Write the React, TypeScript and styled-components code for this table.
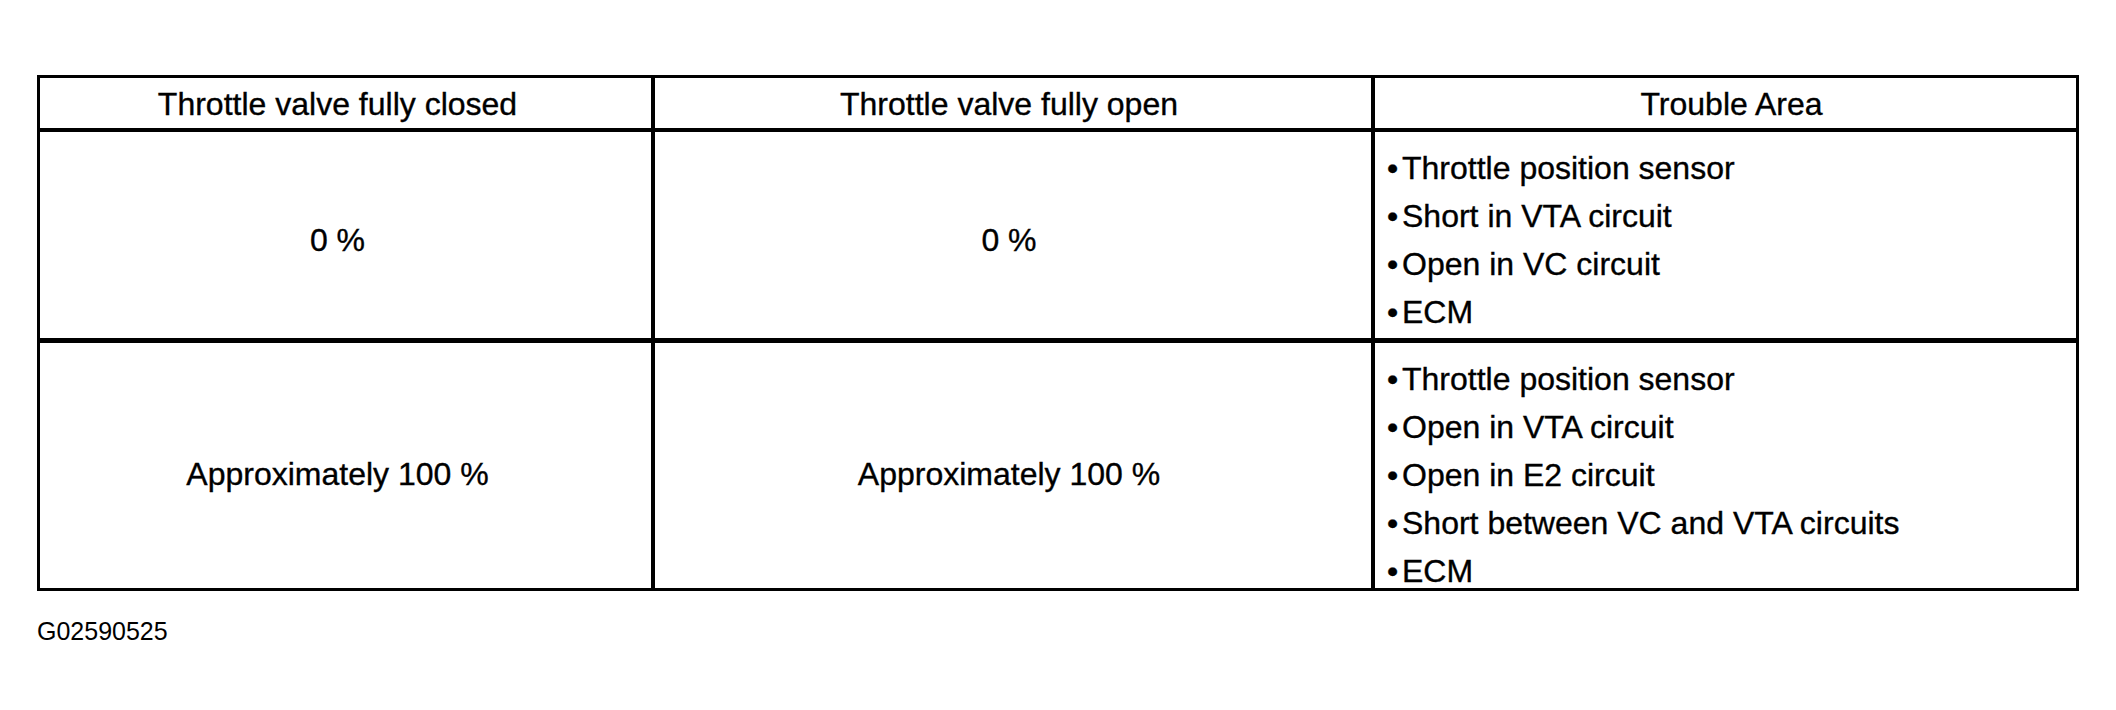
import React from 'react';
import styled, { createGlobalStyle } from 'styled-components';

const GlobalStyle = createGlobalStyle`
  html, body {
    margin: 0;
    padding: 0;
    background: #ffffff;
  }
  body {
    font-family: "Liberation Sans", Arial, sans-serif;
    color: #000000;
  }
`;

const Page = styled.div`
  padding: 75px 0 0 37px;
`;

// 3 columns, 3 rows; track sizes include the inner rules
const Table = styled.div`
  display: grid;
  grid-template-columns: 615px 720px 701px;
  grid-template-rows: 54px 211px 245px;
  width: 2042px;
  box-sizing: border-box;
  border: 3px solid #000;
`;

const Cell = styled.div<{ $last?: boolean; $rule?: number }>`
  box-sizing: border-box;
  border-right: ${p => (p.$last ? 0 : 4)}px solid #000;
  border-bottom: ${p => p.$rule ?? 0}px solid #000;
  font-size: 32px;
  -webkit-text-stroke: 0.35px #000;
  min-width: 0;
`;

// nudge moves the centred text sideways (negative = left)
const CenterCell = styled(Cell)<{ $shift?: number; $nudge?: number }>`
  display: flex;
  align-items: center;
  justify-content: center;
  white-space: nowrap;
  padding-top: ${p => p.$shift ?? 0}px;
  padding-left: ${p => Math.max(0, (p.$nudge ?? 0) * 2)}px;
  padding-right: ${p => Math.max(0, -(p.$nudge ?? 0) * 2)}px;
`;

const ListCell = styled(Cell)`
  padding: 20px 0 0 12px;
`;

const List = styled.ul`
  list-style: none;
  margin: 0;
  padding: 0;
  display: flex;
  flex-direction: column;
  gap: 16px;
`;

const Item = styled.li`
  display: flex;
  height: 32px;
  line-height: 32px;
  white-space: nowrap;
`;

const Dot = styled.span`
  flex: 0 0 15px;
`;

const Caption = styled.div`
  margin-top: 26px;
  font-size: 25px;
`;

const nudges = [-8, -4];

const rows = [
  {
    values: ['0 %', '0 %'],
    shift: 10,
    rule: 5,
    areas: ['Throttle position sensor', 'Short in VTA circuit', 'Open in VC circuit', 'ECM'],
  },
  {
    values: ['Approximately 100 %', 'Approximately 100 %'],
    shift: 18,
    rule: 0,
    areas: [
      'Throttle position sensor',
      'Open in VTA circuit',
      'Open in E2 circuit',
      'Short between VC and VTA circuits',
      'ECM',
    ],
  },
];

export default function App() {
  return (
    <>
      <GlobalStyle />
      <Page>
        <Table>
          <CenterCell $rule={4} $shift={2} $nudge={nudges[0]}>Throttle valve fully closed</CenterCell>
          <CenterCell $rule={4} $shift={2} $nudge={nudges[1]}>Throttle valve fully open</CenterCell>
          <CenterCell $rule={4} $shift={2} $nudge={6} $last>Trouble Area</CenterCell>
          {rows.map((r, i) => (
            <React.Fragment key={i}>
              {r.values.map((v, j) => (
                <CenterCell key={j} $rule={r.rule} $shift={r.shift} $nudge={nudges[j]}>
                  {v}
                </CenterCell>
              ))}
              <ListCell $rule={r.rule} $last>
                <List>
                  {r.areas.map(a => (
                    <Item key={a}>
                      <Dot>•</Dot>
                      {a}
                    </Item>
                  ))}
                </List>
              </ListCell>
            </React.Fragment>
          ))}
        </Table>
        <Caption>G02590525</Caption>
      </Page>
    </>
  );
}
